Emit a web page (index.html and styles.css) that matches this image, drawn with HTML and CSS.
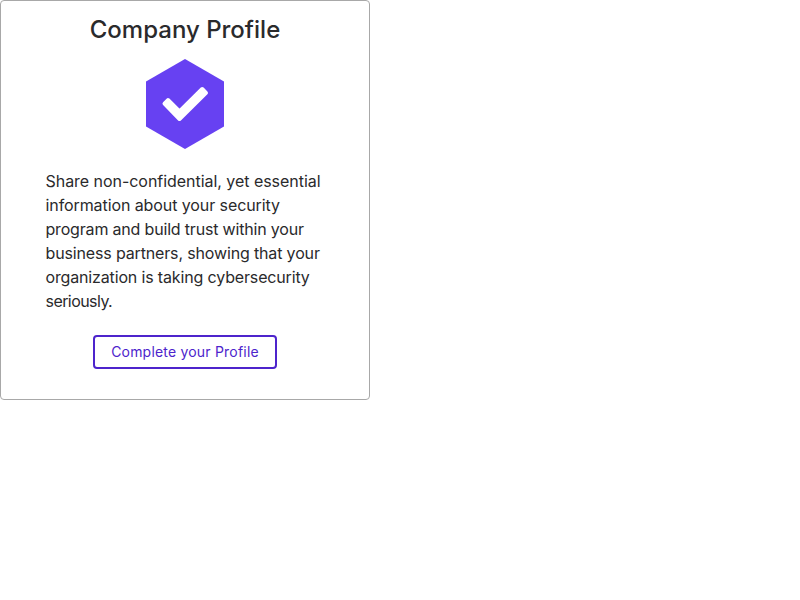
FILE: index.html
```html
<!DOCTYPE html>
<html lang="en">
<head>
<meta charset="utf-8">
<title>Company Profile</title>
<link rel="stylesheet" href="styles.css">
</head>
<body>
<section class="card">
  <h2 class="card-title">Company Profile</h2>
  <svg class="badge" width="78" height="90" viewBox="0 0 78 90" aria-hidden="true">
    <path fill="#6741f2" d="M39 0 78 22.500V67.500L39 90 0 67.500V22.500Z"/>
    <path fill="#fff" stroke="#fff" stroke-width="4" stroke-linejoin="round" d="M22 41 33.500 52.500 56.200 30 60 33.800 33.500 60 18.500 44.700Z"/>
  </svg>
  <p class="card-text">
    <span class="line line-1">Share non-confidential, yet essential</span>
    <span class="line line-2">information about your security</span>
    <span class="line line-3">program and build trust within your</span>
    <span class="line line-4">business partners, showing that your</span>
    <span class="line line-5">organization is taking cybersecurity</span>
    <span class="line line-6">seriously.</span>
  </p>
  <button class="button" type="button">Complete your Profile</button>
</section>
</body>
</html>
```
FILE: styles.css
```css
body {
  margin: 0;
  background: #fff;
  font-family: Inter, sans-serif;
  color: #2a2a2c;
}

.card {
  box-sizing: border-box;
  width: 370px;
  height: 400px;
  padding: 13px 44px 0;
  border: 1px solid #a8a8a8;
  border-radius: 4px;
  display: flex;
  flex-direction: column;
  align-items: center;
}

.card-title {
  margin: 0;
  font-size: 24px;
  line-height: 32px;
  font-weight: 500;
}

.badge {
  display: block;
  flex: none;
  margin-top: 13px;
}

.card-text {
  align-self: stretch;
  margin: 20px 0 22px;
  padding-left: 0.5px;
  font-size: 16px;
  line-height: 24px;
}

.line {
  display: block;
  white-space: nowrap;
}

.line-1 { letter-spacing: -0.04px; }
.line-2 { letter-spacing: -0.09px; }
.line-3 { letter-spacing: -0.18px; }
.line-4 { letter-spacing: -0.15px; }
.line-5 { letter-spacing: -0.15px; }
.line-6 { letter-spacing: -0.56px; }

.button {
  box-sizing: border-box;
  height: 34px;
  padding: 0 16px;
  border: 2px solid #4d24cc;
  border-radius: 4px;
  background: #fff;
  color: #4d24cc;
  font: 400 14px/20px Inter, sans-serif;
  letter-spacing: 0.2px;
}
```
